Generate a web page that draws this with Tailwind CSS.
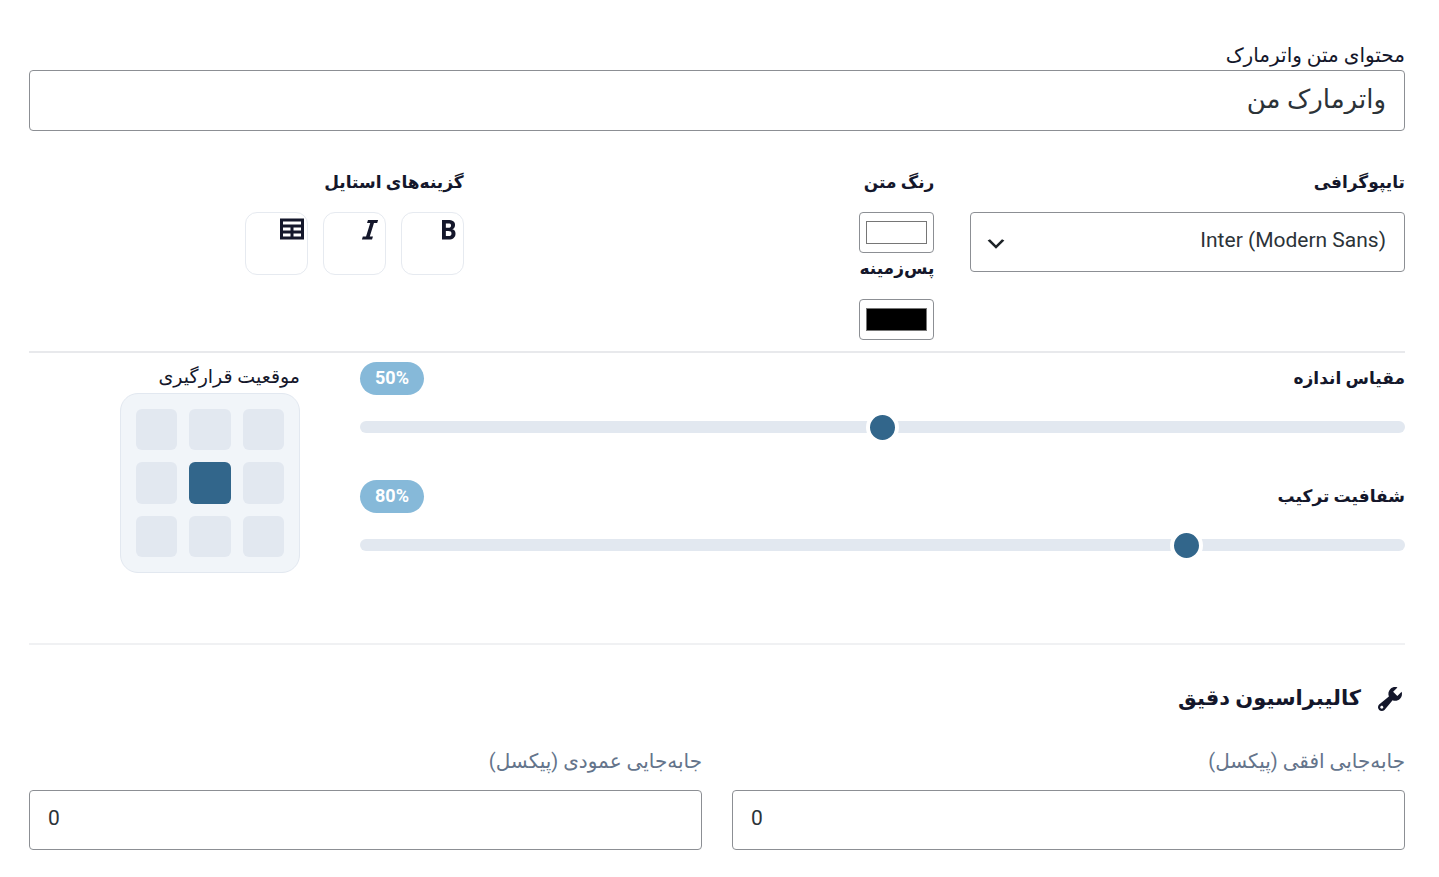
<!DOCTYPE html>
<html lang="fa" dir="rtl">
<head>
<meta charset="utf-8">
<meta name="viewport" content="width=device-width, initial-scale=1">
<title>تنظیمات واترمارک</title>
<script src="https://cdn.jsdelivr.net/npm/@tailwindcss/browser@4"></script>
</head>
<body class="bg-white font-[Roboto,'DejaVu_Sans',sans-serif] text-[#14172b]">
<main class="pt-10 pr-[34px] pb-6 pl-[29px]">

  <section>
    <label for="content" class="block h-[30px] text-[20px] leading-[30px]">محتوای متن واترمارک</label>
    <input id="content" type="text" value="واترمارک من" class="block h-[61px] w-full rounded-[4px] border border-[#8c8f94] px-[18px] pb-1 text-[26px] text-[#2c3338]">
  </section>

  <section class="grid grid-cols-3 gap-9 border-b-2 border-[#e8e9ec] pt-9 pb-[11px]">
    <div>
      <label for="font" class="mb-[15px] block h-[30px] text-[17px] leading-[30px] font-bold">تایپوگرافی</label>
      <div class="relative">
        <select id="font" class="block h-[60px] w-full appearance-none rounded-[4px] border border-[#8c8f94] bg-white pr-[18px] pb-[2px] pl-12 text-[21px] text-[#2c3338]">
          <option>Inter (Modern Sans)</option>
        </select>
        <svg class="pointer-events-none absolute top-5 left-[14px] size-6" viewBox="0 0 20 20" fill="#1d2327" aria-hidden="true"><path d="M5 6l5 5 5-5 2 1-7 7-7-7 2-1z"/></svg>
      </div>
    </div>
    <div>
      <label for="color" class="mb-[15px] block h-[30px] text-[17px] leading-[30px] font-bold">رنگ متن</label>
      <input id="color" type="color" value="#ffffff" class="block h-[41px] w-[75px] rounded-[4px] border border-[#8c8f94] bg-white px-[6px] py-2 [&::-webkit-color-swatch-wrapper]:p-0 [&::-webkit-color-swatch]:rounded-none [&::-webkit-color-swatch]:border [&::-webkit-color-swatch]:border-[#767676]">
      <label for="bg" class="mb-4 block h-[30px] text-[17px] leading-[30px] font-bold">پس‌زمینه</label>
      <input id="bg" type="color" value="#000000" class="block h-[41px] w-[75px] rounded-[4px] border border-[#8c8f94] bg-white px-[6px] py-2 [&::-webkit-color-swatch-wrapper]:p-0 [&::-webkit-color-swatch]:rounded-none [&::-webkit-color-swatch]:border [&::-webkit-color-swatch]:border-[#767676]">
    </div>
    <div>
      <h3 class="mb-[15px] h-[30px] text-[17px] leading-[30px] font-bold">گزینه‌های استایل</h3>
      <div class="flex gap-[15px]">
        <button type="button" aria-label="ضخیم" class="flex size-[63px] items-start justify-start rounded-[12px] border border-[#e6eaf0] pt-px"><svg class="size-[30px]" viewBox="0 0 20 20" fill="currentColor"><path d="M6 4v13h4.54c1.37 0 2.46-.33 3.26-1 .8-.66 1.2-1.58 1.2-2.77 0-.84-.17-1.51-.51-2.01s-.9-.85-1.67-1.03v-.09c.57-.1 1.02-.4 1.36-.9s.51-1.13.51-1.91c0-1.14-.39-1.98-1.17-2.5C12.75 4.26 11.5 4 9.78 4H6zm2.57 5.15V6.26h1.36c.73 0 1.27.11 1.61.32.34.22.51.58.51 1.07 0 .54-.16.92-.47 1.15s-.82.35-1.51.35h-1.5zm0 2.19h1.6c1.44 0 2.16.53 2.16 1.61 0 .6-.17 1.05-.51 1.34s-.86.43-1.57.43H8.57v-3.38z"/></svg></button>
        <button type="button" aria-label="مورب" class="flex size-[63px] items-start justify-start rounded-[12px] border border-[#e6eaf0] pt-px"><svg class="size-[30px]" viewBox="0 0 20 20" fill="currentColor"><path d="M14.78 6h-2.13l-2.8 9h2.12l-.62 2H4.6l.62-2h2.14l2.8-9H8.03l.62-2h6.75z"/></svg></button>
        <button type="button" aria-label="جدول" class="flex size-[63px] items-start justify-start rounded-[12px] border border-[#e6eaf0] pt-px"><svg class="size-[30px]" viewBox="0 0 20 20" fill="currentColor"><path d="M18 17V3H2v14h16zM16 7H4V5h12v2zm-7 4H4V9h5v2zm7 0h-5V9h5v2zm-7 4H4v-2h5v2zm7 0h-5v-2h5v2z"/></svg></button>
      </div>
    </div>
  </section>

  <section class="flex gap-[60px] border-b-2 border-[#f0f1f3] pt-[9px] pb-[70px]">
    <div class="flex flex-1 flex-col gap-[34px]">
      <div>
        <div class="flex h-[33px] items-center justify-between">
          <label for="scale" class="pb-[2px] text-[17px] leading-[30px] font-bold">مقیاس اندازه</label>
          <output for="scale" dir="ltr" class="flex h-[33px] w-16 items-center justify-center rounded-full bg-[#86b9d9] pb-[2px] text-[18px] font-bold text-white">50%</output>
        </div>
        <input id="scale" dir="ltr" type="range" min="0" max="100" value="50" class="mt-[26px] mb-[13px] block h-3 w-full appearance-none rounded-full bg-[#e2e8f0] [&::-webkit-slider-thumb]:size-[33px] [&::-webkit-slider-thumb]:appearance-none [&::-webkit-slider-thumb]:rounded-full [&::-webkit-slider-thumb]:border-4 [&::-webkit-slider-thumb]:border-white [&::-webkit-slider-thumb]:bg-[#32668b]">
      </div>
      <div>
        <div class="flex h-[33px] items-center justify-between">
          <label for="opacity" class="pb-[2px] text-[17px] leading-[30px] font-bold">شفافیت ترکیب</label>
          <output for="opacity" dir="ltr" class="flex h-[33px] w-16 items-center justify-center rounded-full bg-[#86b9d9] pb-[2px] text-[18px] font-bold text-white">80%</output>
        </div>
        <input id="opacity" dir="ltr" type="range" min="0" max="100" value="80" class="mt-[26px] mb-[13px] block h-3 w-full appearance-none rounded-full bg-[#e2e8f0] [&::-webkit-slider-thumb]:size-[33px] [&::-webkit-slider-thumb]:appearance-none [&::-webkit-slider-thumb]:rounded-full [&::-webkit-slider-thumb]:border-4 [&::-webkit-slider-thumb]:border-white [&::-webkit-slider-thumb]:bg-[#32668b]">
      </div>
    </div>
    <div class="w-[271px]">
      <h3 class="mb-px h-[30px] text-[19px] leading-[30px]">موقعیت قرارگیری</h3>
      <div class="grid size-[180px] grid-cols-3 gap-3 rounded-[18px] border border-[#e2e8f0] bg-[#f1f5f9] p-[15px]">
        <button type="button" aria-label="بالا راست" class="rounded-[6px] bg-[#e2e8f0]"></button>
        <button type="button" aria-label="بالا وسط" class="rounded-[6px] bg-[#e2e8f0]"></button>
        <button type="button" aria-label="بالا چپ" class="rounded-[6px] bg-[#e2e8f0]"></button>
        <button type="button" aria-label="وسط راست" class="rounded-[6px] bg-[#e2e8f0]"></button>
        <button type="button" aria-label="مرکز" aria-pressed="true" class="rounded-[6px] bg-[#32668b]"></button>
        <button type="button" aria-label="وسط چپ" class="rounded-[6px] bg-[#e2e8f0]"></button>
        <button type="button" aria-label="پایین راست" class="rounded-[6px] bg-[#e2e8f0]"></button>
        <button type="button" aria-label="پایین وسط" class="rounded-[6px] bg-[#e2e8f0]"></button>
        <button type="button" aria-label="پایین چپ" class="rounded-[6px] bg-[#e2e8f0]"></button>
      </div>
    </div>
  </section>

  <section class="pt-9">
    <h2 class="flex h-[36px] items-center gap-[14px] text-[21px] font-bold">
      <svg class="size-[30px]" viewBox="0 0 20 20" fill="currentColor" aria-hidden="true"><path d="M16.68 9.77c-1.34 1.34-3.3 1.67-4.95.99l-5.41 6.52c-.99.99-2.59.99-3.58 0s-.99-2.59 0-3.57l6.52-5.42c-.68-1.65-.35-3.61.99-4.95 1.28-1.28 3.12-1.62 4.72-1.06l-2.89 2.89 2.82 2.82 2.86-2.87c.53 1.58.18 3.39-1.08 4.65zM3.81 16.21c.4.39 1.04.39 1.43 0 .4-.4.4-1.04 0-1.43-.39-.4-1.03-.4-1.43 0-.39.39-.39 1.03 0 1.43z"/></svg>
      <span>کالیبراسیون دقیق</span>
    </h2>
    <div class="mt-[29px] grid grid-cols-2 gap-[30px]">
      <div>
        <label for="dx" class="mb-[14px] block h-[30px] text-[20px] leading-[30px] text-[#64748b]">جابه‌جایی افقی (پیکسل)</label>
        <input id="dx" dir="ltr" type="text" inputmode="numeric" value="0" class="block h-[60px] w-full rounded-[4px] border border-[#8c8f94] px-[18px] pb-1 text-[21px] text-[#2c3338]">
      </div>
      <div>
        <label for="dy" class="mb-[14px] block h-[30px] text-[20px] leading-[30px] text-[#64748b]">جابه‌جایی عمودی (پیکسل)</label>
        <input id="dy" dir="ltr" type="text" inputmode="numeric" value="0" class="block h-[60px] w-full rounded-[4px] border border-[#8c8f94] px-[18px] pb-1 text-[21px] text-[#2c3338]">
      </div>
    </div>
  </section>
</main>
</body>
</html>
